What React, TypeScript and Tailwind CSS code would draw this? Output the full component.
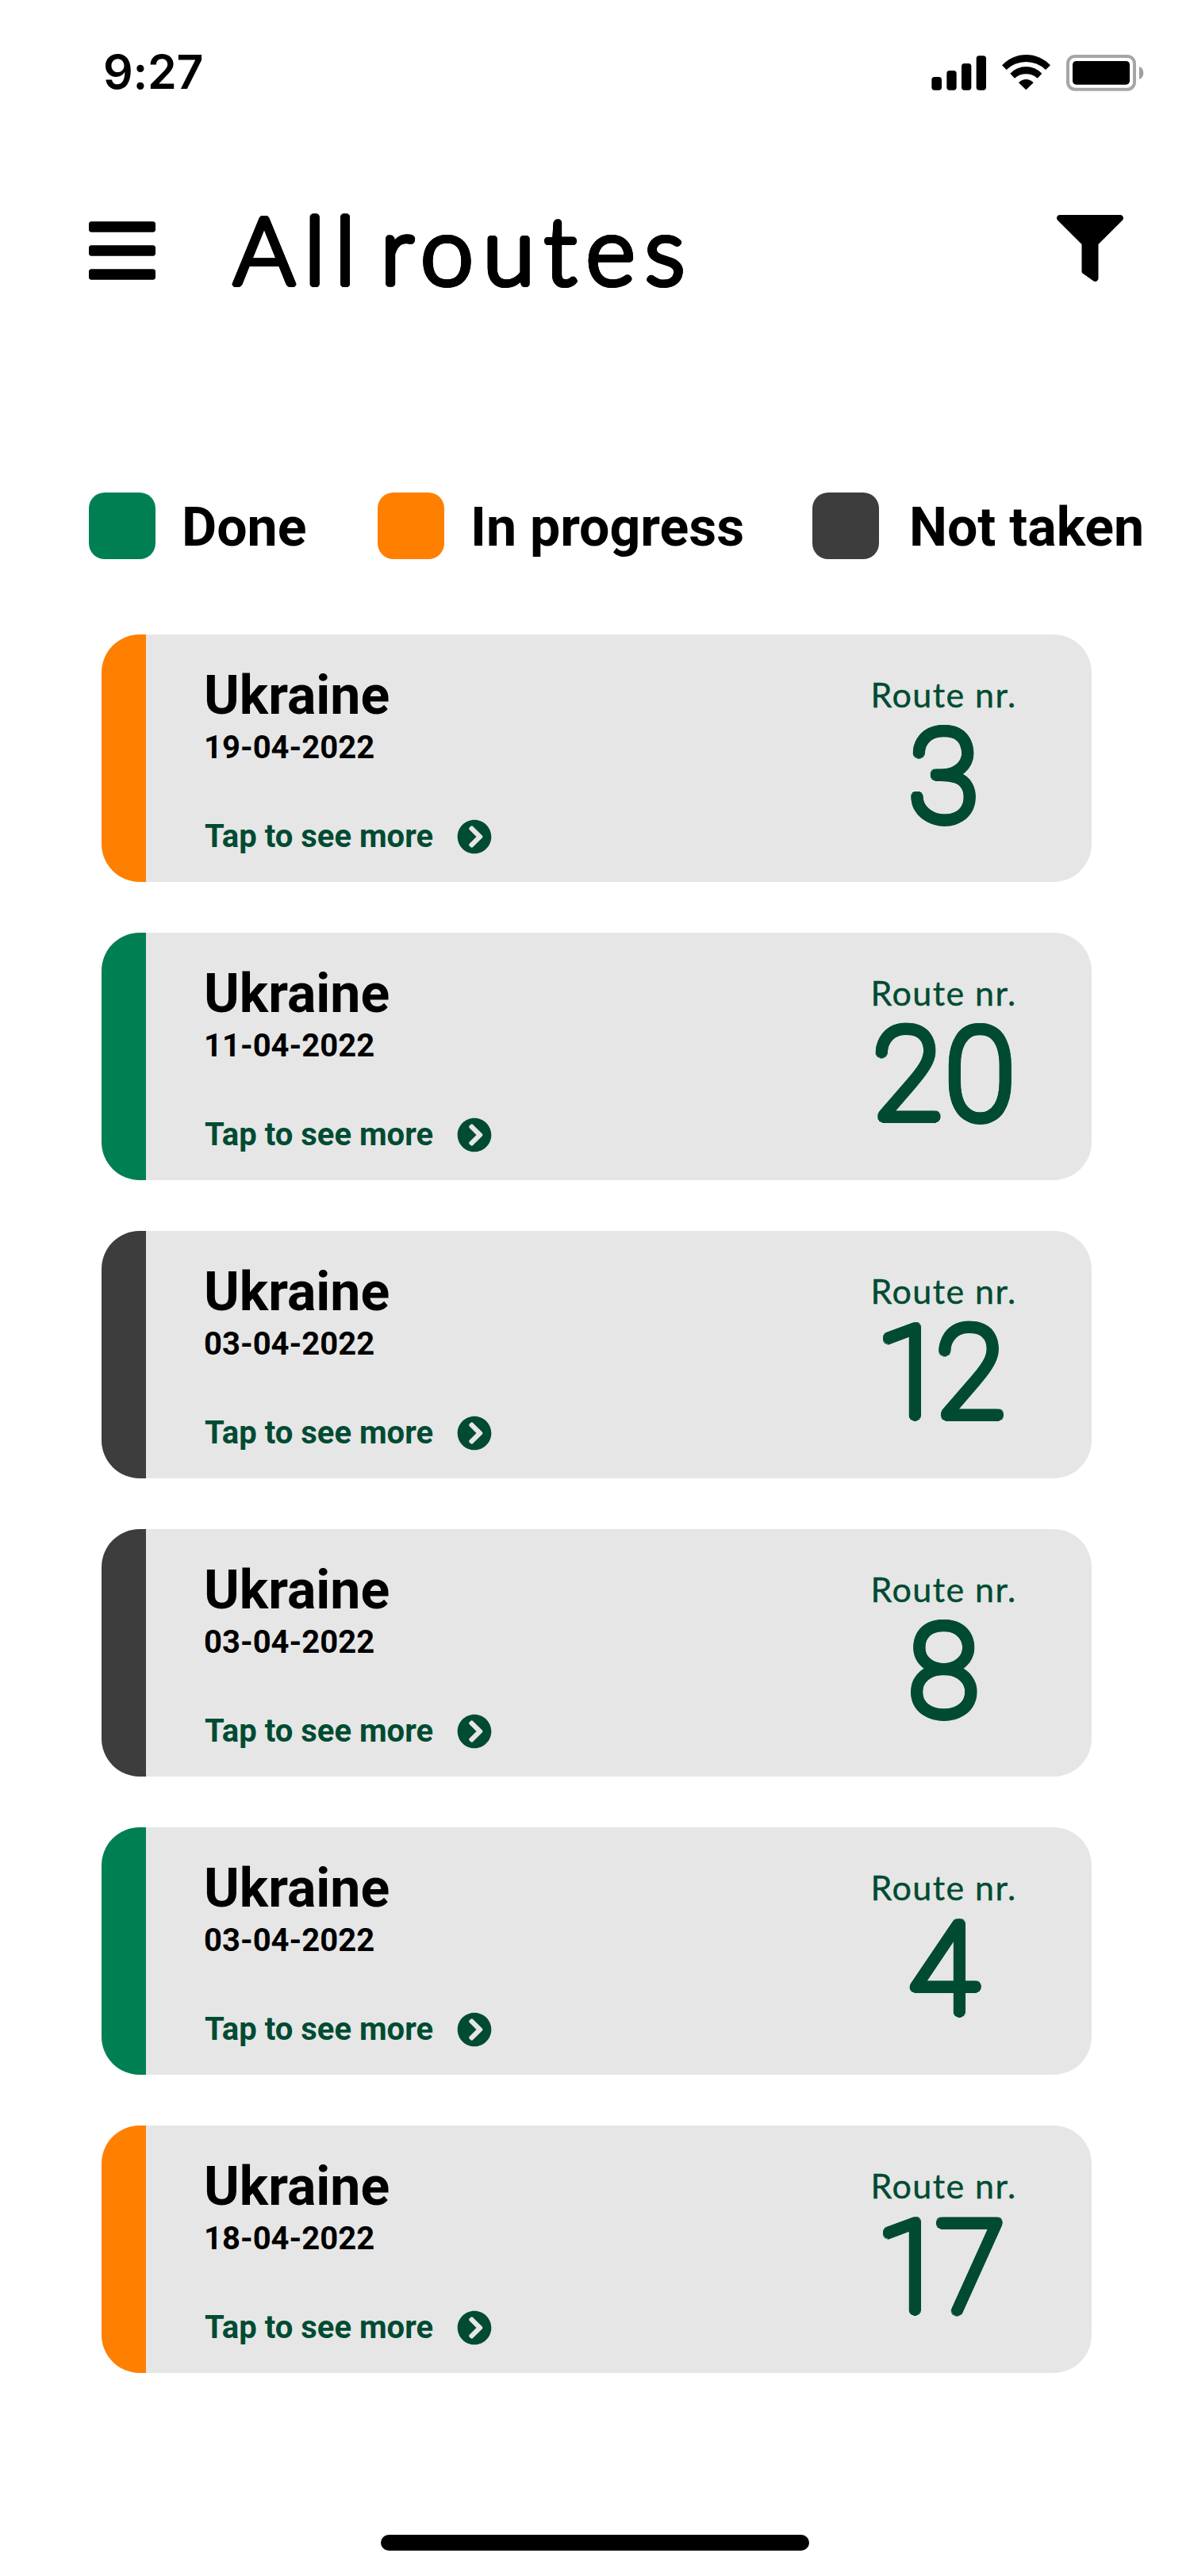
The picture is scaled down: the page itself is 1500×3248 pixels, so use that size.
import { FaBars, FaFilter, FaChevronCircleRight } from 'react-icons/fa';

type Status = 'done' | 'progress' | 'open';

const statusColor: Record<Status, string> = {
  done: 'bg-[#008052]',
  progress: 'bg-[#ff8000]',
  open: 'bg-[#3d3d3d]',
};

const routes: { status: Status; date: string; nr: string }[] = [
  { status: 'progress', date: '19-04-2022', nr: '3' },
  { status: 'done', date: '11-04-2022', nr: '20' },
  { status: 'open', date: '03-04-2022', nr: '12' },
  { status: 'open', date: '03-04-2022', nr: '8' },
  { status: 'done', date: '03-04-2022', nr: '4' },
  { status: 'progress', date: '18-04-2022', nr: '17' },
];

function StatusIcons() {
  return (
    <svg width="268" height="46" viewBox="72 87 804 138" aria-hidden="true">
      <rect x="73" y="171" width="38" height="50" rx="11" />
      <rect x="130" y="147" width="37" height="74" rx="11" />
      <rect x="186" y="120" width="37" height="101" rx="11" />
      <rect x="242" y="91" width="37" height="130" rx="11" />
      <path d="M339 127A125 125 0 0 1 522 127L504 144A106 106 0 0 0 356 144Z" />
      <path d="M370 158A82 82 0 0 1 490 158L473 176A66 66 0 0 0 387 176Z" />
      <path d="M402 193A37 37 0 0 1 458 193L430 220Z" />
      <rect x="588" y="93" width="252" height="125" rx="27" fill="none" stroke="#a6a6a6" strokeWidth="12" />
      <rect x="606" y="111" width="216" height="89" rx="14" />
      <path d="M858 132A26 26 0 0 1 858 180Z" fill="#a0a0a0" />
    </svg>
  );
}

function Legend({ status, label, className }: { status: Status; label: string; className: string }) {
  return (
    <div className={`flex items-center ${className}`}>
      <span className={`size-[84px] shrink-0 rounded-[20px] ${statusColor[status]}`} />
      <span className="whitespace-nowrap pt-[5px]">{label}</span>
    </div>
  );
}

function RouteCard({ status, date, nr }: { status: Status; date: string; nr: string }) {
  // A leading "1" is narrow, so its pair is set tighter.
  const spacing = nr.length > 1 && nr.startsWith('1') ? 'tracking-[-12px] pr-[21px]' : 'tracking-[4px] pl-[3px]';
  return (
    <article className="flex h-[312px] overflow-hidden rounded-[48px] bg-[#e6e6e6]">
      <div className={`w-[56px] shrink-0 ${statusColor[status]}`} />
      <div className="flex-1 pl-[73px] pt-[37px] font-bold">
        <h2 className="text-[68px] leading-[80px]">Ukraine</h2>
        <p className="mt-[2px] text-[40px] leading-[48px]">{date}</p>
        <div className="mt-[64px] flex items-center text-[40px] leading-[48px] text-[#004b32]">
          <span className="w-[319px] whitespace-nowrap pl-px">Tap to see more</span>
          <FaChevronCircleRight size={44} />
        </div>
      </div>
      <div className="mr-[62px] w-[248px] shrink-0 pt-[50px] text-center text-[#004b32]">
        <p className="whitespace-nowrap pr-px font-['Lato',sans-serif] text-[43px] leading-[52px] tracking-[1.45px] [-webkit-text-stroke:0.4px_#004b32]">Route nr.</p>
        <p className={`-mt-[2px] text-[160px] font-thin leading-[160px] [text-shadow:5.5px_0_#004b32,-5.5px_0_#004b32,0_5.5px_#004b32,0_-5.5px_#004b32,3.9px_3.9px_#004b32,-3.9px_3.9px_#004b32,3.9px_-3.9px_#004b32,-3.9px_-3.9px_#004b32,5.1px_2.1px_#004b32,-5.1px_2.1px_#004b32,5.1px_-2.1px_#004b32,-5.1px_-2.1px_#004b32,2.1px_5.1px_#004b32,-2.1px_5.1px_#004b32,2.1px_-5.1px_#004b32,-2.1px_-5.1px_#004b32,2.5px_0_#004b32,-2.5px_0_#004b32,0_2.5px_#004b32,0_-2.5px_#004b32] ${spacing}`}>
          {nr}
        </p>
      </div>
    </article>
  );
}

export default function App() {
  return (
    <div className="flex h-[3248px] w-[1500px] flex-col overflow-hidden bg-white font-['Roboto',sans-serif] text-black">
      <div className="flex h-[180px] shrink-0 items-start justify-between pl-[130px] pr-[58px] pt-[51px]">
        <span className="font-['Inter',sans-serif] text-[59px] font-semibold leading-[80px] tracking-[-0.3px]">9:27</span>
        <div className="pt-[18px]">
          <StatusIcons />
        </div>
      </div>
      <header className="flex h-[440px] shrink-0 items-start pl-[106px] pr-[84px]">
        <FaBars size={96} className="mt-[88px]" />
        <h1 className="ml-[92px] mt-[73px] flex-1 font-['Lato',sans-serif] text-[119px] font-light leading-[120px] tracking-[12px] [word-spacing:-25px] [text-shadow:3.2px_0_#000,-3.2px_0_#000,0_3.2px_#000,0_-3.2px_#000,2.3px_2.3px_#000,-2.3px_2.3px_#000,2.3px_-2.3px_#000,-2.3px_-2.3px_#000,3px_1.2px_#000,-3px_1.2px_#000,3px_-1.2px_#000,-3px_-1.2px_#000,1.2px_3px_#000,-1.2px_3px_#000,1.2px_-3px_#000,-1.2px_-3px_#000]">
          All routes
        </h1>
        <FaFilter size={84} className="mt-[91px]" />
      </header>
      <div className="flex h-[180px] shrink-0 items-start pl-[112px] text-[68px] font-bold leading-[80px]">
        <Legend status="done" label="Done" className="w-[364px] gap-[33px]" />
        <Legend status="progress" label="In progress" className="w-[548px] gap-[33px]" />
        <Legend status="open" label="Not taken" className="gap-[38px]" />
      </div>
      <main className="flex flex-col gap-[64px] pl-[128px] pr-[124px]">
        {routes.map((r, i) => (
          <RouteCard key={i} {...r} />
        ))}
      </main>
      <div className="mb-[32px] mt-auto h-[20px] w-[540px] shrink-0 self-center rounded-full bg-black" />
    </div>
  );
}
